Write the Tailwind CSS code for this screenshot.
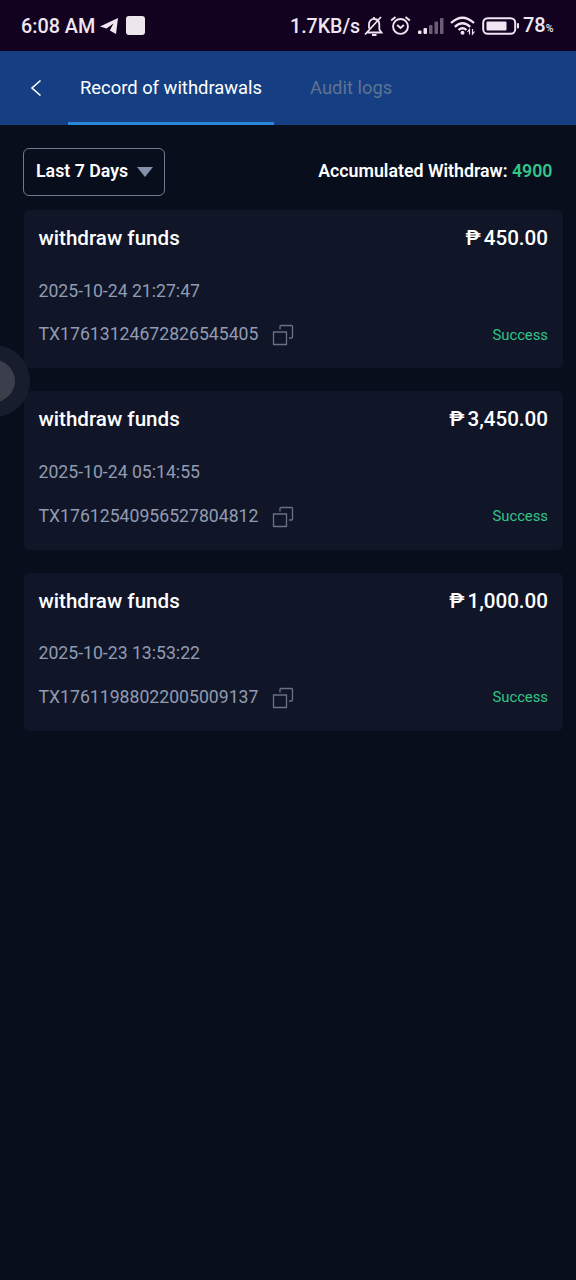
<!DOCTYPE html>
<html lang="en">
<head>
<meta charset="utf-8">
<title>Record of withdrawals</title>
<script src="https://cdn.jsdelivr.net/npm/@tailwindcss/browser@4"></script>
</head>
<body class="relative flex h-[1280px] w-[576px] flex-col overflow-hidden bg-[#080e1c] font-[Roboto,sans-serif] text-white">
<svg class="hidden">
  <symbol id="copy" viewBox="0 0 22 22"><path d="M1.500 8h13v12.500h-13zM8 5.500V2.500q0-1 1-1h10.500q1 0 1 1V13q0 1-1 1H17" fill="none" stroke="#697286" stroke-width="1.300" stroke-linejoin="round"/></symbol>
</svg>
<header class="flex h-[51px] shrink-0 items-center bg-[#12021f] pl-[21px] text-[#f0e6f2]">
  <span class="w-[79px] whitespace-nowrap pt-[2px] text-[19.8px] font-medium leading-[52px]">6:08 AM</span>
  <svg class="h-[18px] w-[19px]" viewBox="0 0 19 18"><path d="M0 9.500 18 1 16 17 9.800 13.500 13.500 6.500 6.500 11.500z" fill="currentColor"/></svg>
  <div class="ml-[7px] h-[19px] w-[19px] rounded-[3px] bg-[#ede7ec]"></div>
  <span class="ml-[145px] w-[74px] whitespace-nowrap pt-[2px] text-[19.6px] font-medium leading-[52px]">1.7KB/s</span>
  <svg class="h-[22px] w-[20px]" viewBox="0 0 20 22" fill="none" stroke="currentColor" stroke-width="1.800"><path d="M3 17.500h14.500l-2.200-3V9.500c0-3-1.800-5.200-4.800-5.500C7.200 3.700 5 6 5 9.500v4M10 4V2M1 19.500 17 2"/><path d="M8 20h4.500" stroke-width="2"/></svg>
  <svg class="ml-[6px] h-[21px] w-[21px]" viewBox="0 0 22 22" fill="none" stroke="currentColor" stroke-width="2"><circle cx="11" cy="12" r="7.800"/><path d="M1.200 5.800 5.800 2M20.800 5.800 16.200 2M7.500 10.500l3.500 3 3.500-3"/></svg>
  <svg class="ml-[7px] h-[18px] w-[26px]" viewBox="0 0 26 18" fill="currentColor"><rect y="13.500" width="3.500" height="3.500" rx="1"/><rect x="5.500" y="11" width="3.500" height="6" rx="1"/><g opacity=".4"><rect x="11" y="8" width="3.500" height="9" rx="1"/><rect x="16.500" y="4.500" width="3.500" height="12.500" rx="1"/><rect x="22" y="1" width="3.500" height="16" rx="1"/></g></svg>
  <svg class="ml-[6px] h-[20px] w-[26px]" viewBox="0 0 26 20" fill="none" stroke="currentColor" stroke-width="2.300"><path d="M1 7Q12.500-3.500 24 7M4.800 10.800q7.700-7 15.400 0M8.500 14q4-3.600 8 0"/><circle cx="12.500" cy="16.800" r="2" fill="currentColor" stroke="none"/><path d="M19.500 18.500v-5l-2 2.500M22.500 13v5l2-2.500" stroke-width="1.200"/></svg>
  <svg class="ml-[6px] h-[18px] w-[38px]" viewBox="0 0 38 18"><rect x="1.200" y="1.200" width="32" height="15.600" rx="4.500" fill="none" stroke="currentColor" stroke-width="2"/><rect x="4.500" y="4.500" width="20" height="9" rx="1" fill="currentColor"/><rect x="35" y="6" width="2" height="5.500" rx="1" fill="currentColor"/></svg>
  <span class="ml-[3px] flex items-baseline whitespace-nowrap pt-[3px] text-[20px] font-medium leading-[52px]">78<span class="text-[10.5px]">%</span></span>
</header>
<nav class="flex h-[74px] shrink-0 bg-[#153f82] text-[18.4px]">
  <div class="flex w-[68px] items-center pl-[30px]"><svg class="h-[18px] w-[12px]" viewBox="0 0 12 18"><path d="M10.500 1.500 2 9l8.500 7.500" fill="none" stroke="#fff" stroke-width="1.600"/></svg></div>
  <div class="flex w-[206px] items-center justify-center whitespace-nowrap border-b-[3px] border-[#2b87dc] pt-[2px]">Record of withdrawals</div>
  <div class="flex items-center whitespace-nowrap pb-[1px] pl-[36px] text-[#5f7394]">Audit logs</div>
</nav>
<section class="flex shrink-0 items-center justify-between pl-[23px] pr-[23.500px] pt-[23px] text-[17.75px] font-semibold">
  <div class="flex h-[48px] w-[142px] items-center whitespace-nowrap rounded-[6px] border border-[#70788a] pb-[2px] pl-[12px]"><span class="w-[101px]">Last 7 Days</span><svg class="mt-[1px] h-[10px] w-[16px]" viewBox="0 0 16 10"><path d="M0 0h16L8 10z" fill="#8590aa"/></svg></div>
  <div class="whitespace-nowrap pb-[1px]">Accumulated Withdraw: <span class="text-[#31c587]">4900</span></div>
</section>
<main class="flex flex-col gap-[23px] pl-[24px] pr-[13px] pt-[14px]">
  <article class="h-[158.300px] rounded-[6px] bg-[#101628] px-[15px] pt-[14px]">
    <div class="-ml-[0.500px] flex h-[28px] items-center justify-between text-[20.6px] font-medium"><span>withdraw funds</span><span>₱<span class="ml-[3px]">450.00</span></span></div>
    <div class="-ml-[0.500px] mt-[27px] h-[24px] text-[17.65px] leading-[24px] text-[#929bb1]">2025-10-24 21:27:47</div>
    <div class="-ml-[0.500px] mt-[19px] flex h-[24px] items-center text-[17.65px] text-[#929bb1]"><span class="w-[219.500px] pt-[1px]">TX17613124672826545405</span><svg class="ml-[14px] mt-[2px] h-[22px] w-[22px]"><use href="#copy"/></svg><span class="ml-auto pt-[2px] text-[14.8px] text-[#31c587]">Success</span></div>
  </article>
  <article class="h-[158.300px] rounded-[6px] bg-[#101628] px-[15px] pt-[14px]">
    <div class="-ml-[0.500px] flex h-[28px] items-center justify-between pt-[1px] text-[20.6px] font-medium"><span>withdraw funds</span><span>₱<span class="ml-[3px]">3,450.00</span></span></div>
    <div class="-ml-[0.500px] mt-[27px] h-[24px] text-[17.65px] leading-[24px] text-[#929bb1]">2025-10-24 05:14:55</div>
    <div class="-ml-[0.500px] mt-[19px] flex h-[24px] items-center text-[17.65px] text-[#929bb1]"><span class="w-[219.500px] pt-[2px]">TX17612540956527804812</span><svg class="ml-[14px] mt-[3px] h-[22px] w-[22px]"><use href="#copy"/></svg><span class="ml-auto pt-[2px] text-[14.8px] text-[#31c587]">Success</span></div>
  </article>
  <article class="h-[158.300px] rounded-[6px] bg-[#101628] px-[15px] pt-[14px]">
    <div class="-ml-[0.500px] flex h-[28px] items-center justify-between pt-[1px] text-[20.6px] font-medium"><span>withdraw funds</span><span>₱<span class="ml-[3px]">1,000.00</span></span></div>
    <div class="-ml-[0.500px] mt-[26px] h-[24px] text-[17.65px] leading-[24px] text-[#929bb1]">2025-10-23 13:53:22</div>
    <div class="-ml-[0.500px] mt-[20px] flex h-[24px] items-center text-[17.65px] text-[#929bb1]"><span class="w-[219.500px] pt-[2px]">TX17611988022005009137</span><svg class="ml-[14px] mt-[2px] h-[22px] w-[22px]"><use href="#copy"/></svg><span class="ml-auto pt-[1px] text-[14.8px] text-[#31c587]">Success</span></div>
  </article>
</main>
<div class="absolute left-[-42px] top-[345px] flex h-[72px] w-[72px] items-center justify-center rounded-full bg-[#1a2030]/85"><div class="h-[42px] w-[42px] rounded-full bg-[#3a3f4b]"></div></div>
</body>
</html>
